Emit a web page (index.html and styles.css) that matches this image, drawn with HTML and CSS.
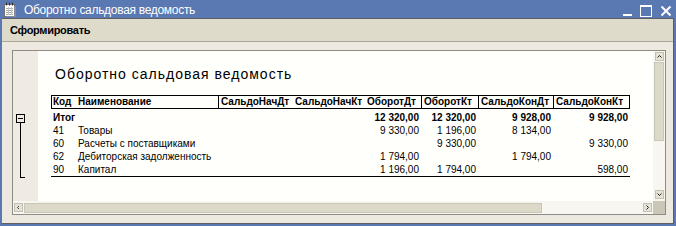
FILE: index.html
```html
<!DOCTYPE html>
<html lang="ru">
<head>
<meta charset="utf-8">
<title>Оборотно сальдовая ведомость</title>
<link rel="stylesheet" href="styles.css">
</head>
<body>
<div class="window">
  <div class="titlebar">
    <svg class="app-icon" width="14" height="15" viewBox="0 0 14 15">
      <rect x="1.5" y="2.5" width="10" height="12" fill="#ffffff" stroke="#707070"/>
      <path d="M12 4v11H3" stroke="#9aa3b8" fill="none"/>
      <path d="M3 6.5h7M3 8.5h7M3 10.5h7M3 12.5h7" stroke="#a8a8a8"/>
      <path d="M5.5 5v8M8.5 5v8" stroke="#c4c4c4"/>
      <path d="M3.5 0.5v3M6.5 0.5v3M9.5 0.5v3" stroke="#303030"/>
    </svg>
    <span class="title">Оборотно сальдовая ведомость</span>
    <div class="controls">
      <svg width="9" height="12" viewBox="0 0 9 12"><rect x="0" y="9" width="9" height="2" fill="#ffffff"/></svg>
      <svg width="12" height="12" viewBox="0 0 12 12"><rect x="0.5" y="0.5" width="11" height="11" fill="none" stroke="#ffffff"/><rect x="0" y="0" width="12" height="2" fill="#ffffff"/></svg>
      <svg width="12" height="12" viewBox="0 0 12 12"><path d="M1.5 1.5l9 9M10.5 1.5l-9 9" stroke="#ffffff" stroke-width="2"/></svg>
    </div>
  </div>
  <div class="client">
    <div class="menubar"><span class="menu-item">Сформировать</span></div>
    <div class="frame">
      <div class="gutter">
        <span class="toggle"></span>
        <span class="bracket"></span>
      </div>
      <div class="sheet">
        <h1 class="report-title">Оборотно сальдовая ведомость</h1>
        <div class="report">
          <div class="row head">
            <span class="c">Код</span>
            <span class="c">Наименование</span>
            <span class="c sep">СальдоНачДт</span>
            <span class="c p3">СальдоНачКт</span>
            <span class="c p5">ОборотДт</span>
            <span class="c sep">ОборотКт</span>
            <span class="c sep">СальдоКонДт</span>
            <span class="c sep">СальдоКонКт</span>
          </div>
          <div class="row total">
            <span class="c">Итог</span><span class="c"></span><span class="c"></span><span class="c"></span>
            <span class="c n">12 320,00</span><span class="c n">12 320,00</span><span class="c n">9 928,00</span><span class="c n">9 928,00</span>
          </div>
          <div class="row">
            <span class="c">41</span><span class="c">Товары</span><span class="c"></span><span class="c"></span>
            <span class="c n">9 330,00</span><span class="c n">1 196,00</span><span class="c n">8 134,00</span><span class="c n"></span>
          </div>
          <div class="row">
            <span class="c">60</span><span class="c">Расчеты с поставщиками</span><span class="c"></span><span class="c"></span>
            <span class="c n"></span><span class="c n">9 330,00</span><span class="c n"></span><span class="c n">9 330,00</span>
          </div>
          <div class="row">
            <span class="c">62</span><span class="c">Дебиторская задолженность</span><span class="c"></span><span class="c"></span>
            <span class="c n">1 794,00</span><span class="c n"></span><span class="c n">1 794,00</span><span class="c n"></span>
          </div>
          <div class="row last">
            <span class="c">90</span><span class="c">Капитал</span><span class="c"></span><span class="c"></span>
            <span class="c n">1 196,00</span><span class="c n">1 794,00</span><span class="c n"></span><span class="c n">598,00</span>
          </div>
        </div>
      </div>
      <div class="vscroll">
        <span class="sbtn"><svg width="7" height="7" viewBox="0 0 7 7"><path d="M1.5 4.5l2-2 2 2" stroke="#222" fill="none"/></svg></span>
        <span class="vthumb"></span>
        <span class="sbtn down"><svg width="7" height="7" viewBox="0 0 7 7"><path d="M1.5 2.5l2 2 2-2" stroke="#222" fill="none"/></svg></span>
      </div>
      <div class="hscroll">
        <span class="sbtn"><svg width="7" height="7" viewBox="0 0 7 7"><path d="M4 2l-1.5 1.5L4 5" stroke="#444" fill="none"/></svg></span>
        <span class="hthumb"></span>
        <span class="sbtn right"><svg width="7" height="7" viewBox="0 0 7 7"><path d="M2.5 1.5l2 2-2 2" stroke="#222" fill="none"/></svg></span>
      </div>
      <div class="corner"></div>
    </div>
  </div>
</div>
</body>
</html>
```

FILE: styles.css
```css
html, body {
  margin: 0;
  padding: 0;
}

body {
  background: #5a78b2;
  font-family: "Liberation Sans", Arial, sans-serif;
  width: 676px;
  height: 226px;
  overflow: hidden;
}

.window {
  width: 676px;
  height: 226px;
  display: flex;
  flex-direction: column;
}

.titlebar {
  height: 18px;
  flex: none;
  display: flex;
  align-items: center;
  padding-left: 3px;
  color: #ffffff;
}

.app-icon {
  flex: none;
  margin-right: 7px;
}

.title {
  font-size: 12px;
  line-height: 14px;
  padding-top: 2px;
  letter-spacing: -0.3px;
  white-space: nowrap;
}

.controls {
  margin-left: auto;
  align-self: stretch;
  display: flex;
  align-items: center;
  gap: 8px;
  padding: 3px 4px 0 0;
}

.controls svg {
  display: block;
}

.client {
  flex: 1;
  margin: 0 2px 2px 2px;
  border-top: 1px solid #5e5e5e;
  border-right: 1px solid #5e5e5e;
  border-bottom: 1px solid #5e5e5e;
  background: #ede9e0;
  display: flex;
  flex-direction: column;
}

.menubar {
  height: 22px;
  flex: none;
  background: #dedbcb;
  border-bottom: 1px solid #a9a79d;
  display: flex;
  align-items: center;
  padding-left: 8px;
}

.menu-item {
  font-size: 11px;
  font-weight: bold;
  letter-spacing: -0.3px;
  color: #000000;
}

.frame {
  margin: 8px 7px 0 10px;
  border: 1px solid #8e8c84;
  display: grid;
  grid-template-columns: 25px 615px 12px;
  grid-template-rows: 150px 13px;
}

.gutter {
  grid-column: 1;
  grid-row: 1;
  background: #efebe3;
  padding: 63px 0 0 3px;
}

.toggle {
  display: flex;
  align-items: center;
  justify-content: center;
  box-sizing: border-box;
  width: 9px;
  height: 9px;
  border: 1px solid #000000;
}

.toggle::after {
  content: "";
  display: block;
  width: 5px;
  height: 1px;
  background: #000000;
}

.bracket {
  display: block;
  margin-left: 4px;
  width: 4px;
  height: 54px;
  border-left: 1px solid #000000;
  border-bottom: 1px solid #000000;
}

.sheet {
  grid-column: 2;
  grid-row: 1;
  background: #fffffc;
  padding-top: 15px;
  overflow: hidden;
}

.report-title {
  margin: 0 0 0 17px;
  font-size: 14px;
  line-height: 16px;
  height: 16px;
  font-weight: normal;
  letter-spacing: 1px;
  color: #000000;
  white-space: nowrap;
}

.report {
  margin: 13px 0 0 13px;
  width: 579px;
  font-size: 10px;
  color: #000000;
}

.row {
  display: grid;
  grid-template-columns: 25px 142px 74px 70px 59px 57px 75px 77px;
  line-height: 13px;
  height: 13px;
  white-space: nowrap;
}

.row.head {
  grid-template-columns: 24px 142px 74px 70px 59px 57px 75px 76px;
  border: 1px solid #000000;
  line-height: 12px;
  height: 12px;
  font-weight: bold;
  margin-bottom: 2px;
}

.row.total {
  font-weight: bold;
}

.row.last {
  border-bottom: 1px solid #000000;
}

.c {
  padding-left: 2px;
  overflow: hidden;
}

.head .c:first-child {
  padding-left: 1px;
}

.sep {
  border-left: 1px solid #000000;
}

.p3 {
  padding-left: 3px;
}

.p5 {
  padding-left: 5px;
}

.n {
  text-align: right;
  padding-left: 0;
  padding-right: 2px;
}

.vscroll {
  grid-column: 3;
  grid-row: 1;
  background: #f7f6f0;
  display: flex;
  flex-direction: column;
  align-items: center;
  padding-top: 1px;
}

.hscroll {
  grid-column: 1 / 3;
  grid-row: 2;
  background: #f7f6f0;
  display: flex;
  align-items: center;
  padding: 0 1px;
}

.corner {
  grid-column: 3;
  grid-row: 2;
  background: #cbc7b8;
}

.sbtn {
  flex: none;
  box-sizing: border-box;
  width: 9px;
  height: 9px;
  background: #e4e1d5;
  border: 1px solid #c3c0b4;
  display: flex;
  align-items: center;
  justify-content: center;
}

.sbtn svg {
  display: block;
}

.sbtn.down {
  margin-top: auto;
  margin-bottom: 2px;
}

.sbtn.right {
  margin-left: auto;
}

.vthumb {
  flex: none;
  box-sizing: border-box;
  margin-top: 1px;
  width: 10px;
  height: 79px;
  background: #dcd9c9;
  border: 1px solid #c9c6b7;
}

.hthumb {
  flex: none;
  box-sizing: border-box;
  margin-left: 1px;
  width: 518px;
  height: 10px;
  background: #dcd9c9;
  border: 1px solid #c9c6b7;
}
```
